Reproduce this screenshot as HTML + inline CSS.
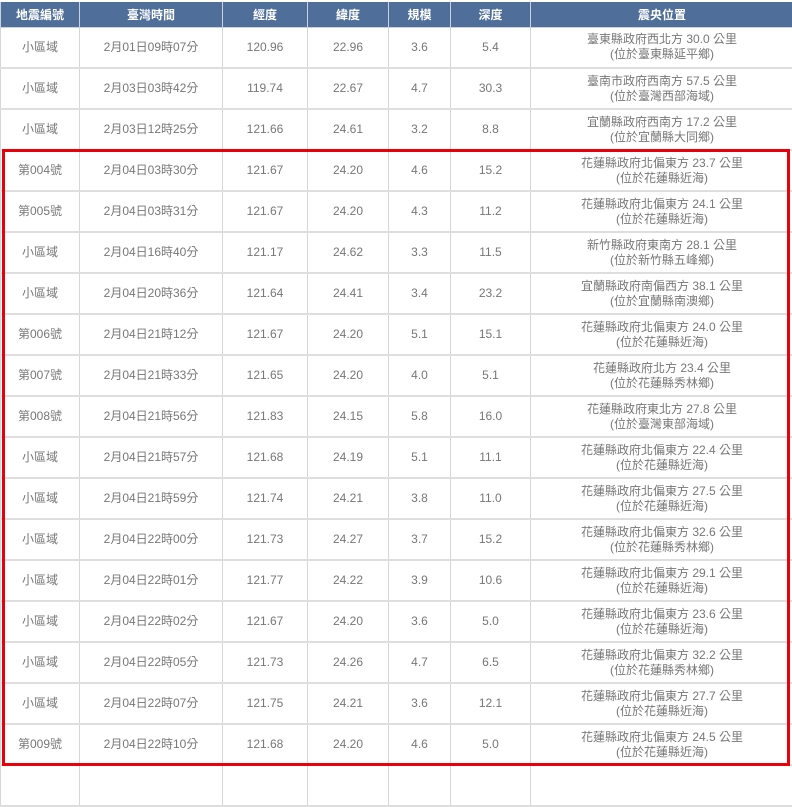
<!DOCTYPE html>
<html><head><meta charset="utf-8"><style>
*{margin:0;padding:0;box-sizing:border-box}
body{width:792px;height:770px;overflow:hidden;background:#fff;font-family:"Liberation Sans","Noto Sans CJK TC",sans-serif;}
table{position:absolute;left:0;top:2px;border-collapse:collapse;table-layout:fixed;width:793px}
th{background:#4f6e99;color:#fff;font-size:12px;font-weight:bold;height:25px;border:1px solid #c9d3e0;border-top:none;text-align:center}
td{height:41px;border:1px solid #d6d6d6;border-bottom:2px solid #dedede;color:#777;font-size:12px;text-align:center;line-height:15px}
.box{position:absolute;left:2px;top:149px;width:788px;height:617px;border:3px solid #e8000b}
</style></head><body>
<table>
<colgroup><col style="width:79px"><col style="width:143px"><col style="width:85px"><col style="width:81px"><col style="width:62px"><col style="width:80px"><col style="width:263px"></colgroup>
<tr><th>地震編號</th><th>臺灣時間</th><th>經度</th><th>緯度</th><th>規模</th><th>深度</th><th>震央位置</th></tr>
<tr><td>小區域</td><td>2月01日09時07分</td><td>120.96</td><td>22.96</td><td>3.6</td><td>5.4</td><td>臺東縣政府西北方 30.0 公里<br>(位於臺東縣延平鄉)</td></tr>
<tr><td>小區域</td><td>2月03日03時42分</td><td>119.74</td><td>22.67</td><td>4.7</td><td>30.3</td><td>臺南市政府西南方 57.5 公里<br>(位於臺灣西部海域)</td></tr>
<tr><td>小區域</td><td>2月03日12時25分</td><td>121.66</td><td>24.61</td><td>3.2</td><td>8.8</td><td>宜蘭縣政府西南方 17.2 公里<br>(位於宜蘭縣大同鄉)</td></tr>
<tr><td>第004號</td><td>2月04日03時30分</td><td>121.67</td><td>24.20</td><td>4.6</td><td>15.2</td><td>花蓮縣政府北偏東方 23.7 公里<br>(位於花蓮縣近海)</td></tr>
<tr><td>第005號</td><td>2月04日03時31分</td><td>121.67</td><td>24.20</td><td>4.3</td><td>11.2</td><td>花蓮縣政府北偏東方 24.1 公里<br>(位於花蓮縣近海)</td></tr>
<tr><td>小區域</td><td>2月04日16時40分</td><td>121.17</td><td>24.62</td><td>3.3</td><td>11.5</td><td>新竹縣政府東南方 28.1 公里<br>(位於新竹縣五峰鄉)</td></tr>
<tr><td>小區域</td><td>2月04日20時36分</td><td>121.64</td><td>24.41</td><td>3.4</td><td>23.2</td><td>宜蘭縣政府南偏西方 38.1 公里<br>(位於宜蘭縣南澳鄉)</td></tr>
<tr><td>第006號</td><td>2月04日21時12分</td><td>121.67</td><td>24.20</td><td>5.1</td><td>15.1</td><td>花蓮縣政府北偏東方 24.0 公里<br>(位於花蓮縣近海)</td></tr>
<tr><td>第007號</td><td>2月04日21時33分</td><td>121.65</td><td>24.20</td><td>4.0</td><td>5.1</td><td>花蓮縣政府北方 23.4 公里<br>(位於花蓮縣秀林鄉)</td></tr>
<tr><td>第008號</td><td>2月04日21時56分</td><td>121.83</td><td>24.15</td><td>5.8</td><td>16.0</td><td>花蓮縣政府東北方 27.8 公里<br>(位於臺灣東部海域)</td></tr>
<tr><td>小區域</td><td>2月04日21時57分</td><td>121.68</td><td>24.19</td><td>5.1</td><td>11.1</td><td>花蓮縣政府北偏東方 22.4 公里<br>(位於花蓮縣近海)</td></tr>
<tr><td>小區域</td><td>2月04日21時59分</td><td>121.74</td><td>24.21</td><td>3.8</td><td>11.0</td><td>花蓮縣政府北偏東方 27.5 公里<br>(位於花蓮縣近海)</td></tr>
<tr><td>小區域</td><td>2月04日22時00分</td><td>121.73</td><td>24.27</td><td>3.7</td><td>15.2</td><td>花蓮縣政府北偏東方 32.6 公里<br>(位於花蓮縣秀林鄉)</td></tr>
<tr><td>小區域</td><td>2月04日22時01分</td><td>121.77</td><td>24.22</td><td>3.9</td><td>10.6</td><td>花蓮縣政府北偏東方 29.1 公里<br>(位於花蓮縣近海)</td></tr>
<tr><td>小區域</td><td>2月04日22時02分</td><td>121.67</td><td>24.20</td><td>3.6</td><td>5.0</td><td>花蓮縣政府北偏東方 23.6 公里<br>(位於花蓮縣近海)</td></tr>
<tr><td>小區域</td><td>2月04日22時05分</td><td>121.73</td><td>24.26</td><td>4.7</td><td>6.5</td><td>花蓮縣政府北偏東方 32.2 公里<br>(位於花蓮縣秀林鄉)</td></tr>
<tr><td>小區域</td><td>2月04日22時07分</td><td>121.75</td><td>24.21</td><td>3.6</td><td>12.1</td><td>花蓮縣政府北偏東方 27.7 公里<br>(位於花蓮縣近海)</td></tr>
<tr><td>第009號</td><td>2月04日22時10分</td><td>121.68</td><td>24.20</td><td>4.6</td><td>5.0</td><td>花蓮縣政府北偏東方 24.5 公里<br>(位於花蓮縣近海)</td></tr>
<tr><td></td><td></td><td></td><td></td><td></td><td></td><td></td></tr>
</table>
<div class="box"></div>
</body></html>
